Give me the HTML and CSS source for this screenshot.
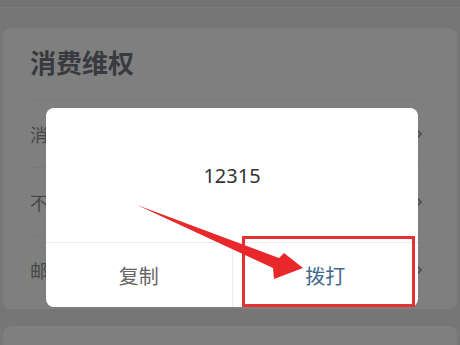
FILE: index.html
```html
<!DOCTYPE html>
<html lang="zh">
<head>
<meta charset="utf-8">
<link rel="stylesheet" href="styles.css">
</head>
<body>
<div class="page">
  <div class="topbar"></div>
  <div class="card">
    <div class="card-title">消费维权</div>
    <div class="row"><span class="row-label">消费者投诉举报热线</span><svg class="chev" viewBox="0 0 8 14"><path d="M1 1l6 6-6 6" fill="none" stroke="#4a4a4a" stroke-width="1.6"/></svg></div>
    <div class="row"><span class="row-label">不良信息举报中心</span><svg class="chev" viewBox="0 0 8 14"><path d="M1 1l6 6-6 6" fill="none" stroke="#4a4a4a" stroke-width="1.6"/></svg></div>
    <div class="row last"><span class="row-label">邮政业用户申诉</span><svg class="chev" viewBox="0 0 8 14"><path d="M1 1l6 6-6 6" fill="none" stroke="#4a4a4a" stroke-width="1.6"/></svg></div>
  </div>
  <div class="card card2"></div>
</div>

<div class="dialog">
  <div class="dialog-body">12315</div>
  <div class="dialog-actions">
    <div class="btn btn-copy">复制</div>
    <div class="btn btn-call">拨打</div>
  </div>
</div>

<div class="highlight"></div>
<svg class="arrow" viewBox="0 0 460 345" width="460" height="345">
  <polygon points="137,205 279,258 284,253 303,268 274,279 273,268" fill="#e8282b"/>
</svg>
</body>
</html>
```
FILE: styles.css
```css
html, body {
  margin: 0;
  padding: 0;
}
body {
  width: 460px;
  height: 345px;
  overflow: hidden;
  background: #767676;
  font-family: "Noto Sans CJK SC", "Noto Sans", sans-serif;
  position: relative;
}
.page {
  padding: 0 3px;
}
.topbar {
  height: 8px;
  margin: 0 -3px 20px;
  background: #737373;
  border-bottom: 1px solid #7a7a7a;
  box-sizing: border-box;
}
.card {
  background: #7f7f7f;
  border-radius: 8px;
  padding: 0 35px 6px 27px;
}
.card-title {
  height: 72px;
  box-sizing: border-box;
  padding-bottom: 4px;
  display: flex;
  align-items: center;
  font-size: 26px;
  font-weight: 700;
  color: #383a3f;
  border-bottom: 1px solid #7a7a7a;
  line-height: 1;
}
.row {
  height: 67px;
  display: flex;
  align-items: center;
  justify-content: space-between;
  border-bottom: 1px solid #7a7a7a;
  font-size: 18px;
  color: #474747;
}
.row.last {
  border-bottom: none;
}
.chev {
  width: 8px;
  height: 14px;
}
.card2 {
  margin-top: 17px;
  height: 20px;
  padding: 0;
  border-radius: 8px 8px 0 0;
}
.dialog {
  position: absolute;
  left: 46px;
  top: 108px;
  width: 372px;
  height: 199px;
  background: #fff;
  border-radius: 8px;
  display: flex;
  flex-direction: column;
  overflow: hidden;
}
.dialog-body {
  height: 134px;
  display: flex;
  align-items: center;
  justify-content: center;
  font-family: "Noto Sans", sans-serif;
  font-size: 20px;
  color: #333;
}
.dialog-actions {
  flex: 1;
  display: flex;
  border-top: 1px solid #ececec;
}
.btn {
  flex: 1;
  display: flex;
  align-items: center;
  justify-content: center;
  font-size: 20px;
}
.btn-copy {
  color: #666;
  border-right: 1px solid #ececec;
}
.btn-call {
  color: #41698f;
}
.highlight {
  position: absolute;
  left: 242px;
  top: 236px;
  width: 173px;
  height: 71px;
  border: 3px solid #e53134;
  box-sizing: border-box;
}
.arrow {
  position: absolute;
  left: 0;
  top: 0;
}
```
